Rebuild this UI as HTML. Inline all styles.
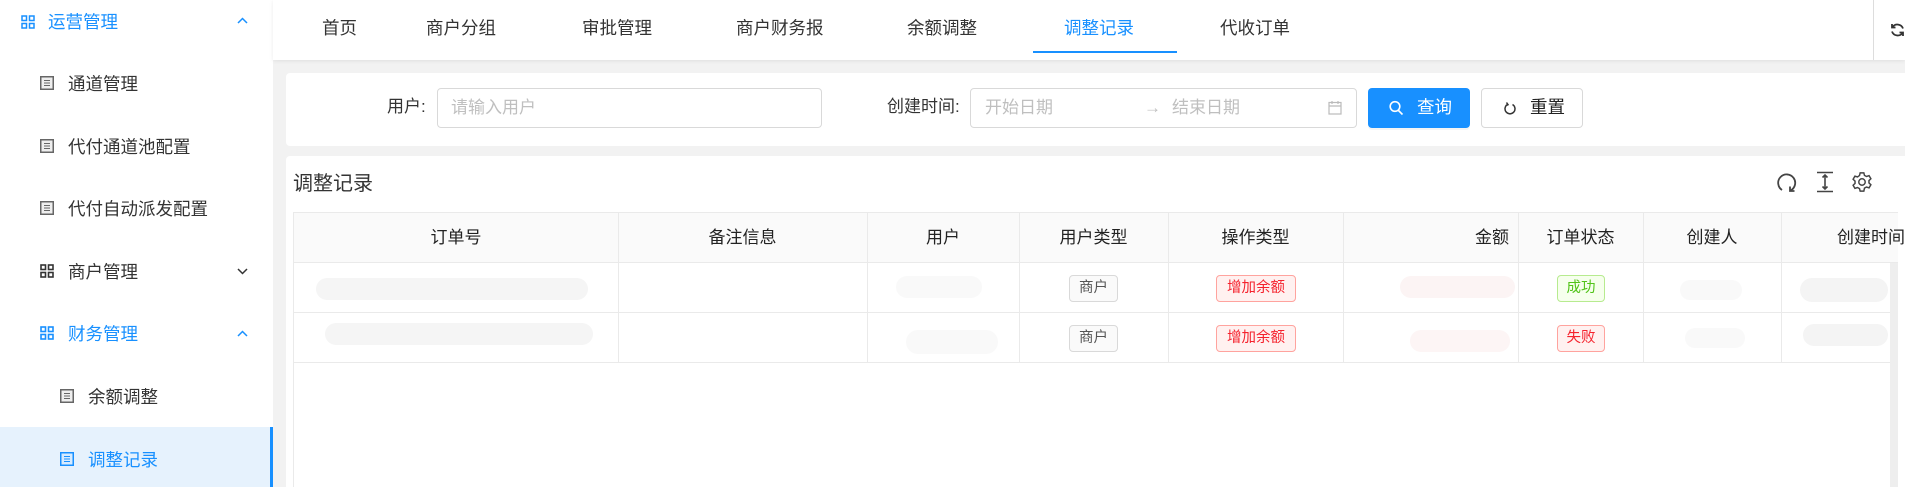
<!DOCTYPE html>
<html><head><meta charset="utf-8">
<style>
*{margin:0;padding:0;box-sizing:border-box}
html,body{width:1905px;height:487px;overflow:hidden}
body{background:#f2f2f2;font-family:"Liberation Sans","Noto Sans CJK SC",sans-serif;position:relative;color:#333}
.a{position:absolute;white-space:nowrap}
.side{position:absolute;left:0;top:0;width:273px;height:487px;background:#fff}
.mi{position:absolute;font-size:17.5px;line-height:20px;color:#333}
.blue{color:#1890ff}
.hdr{position:absolute;left:273px;top:0;width:1632px;height:60px;background:#fff;box-shadow:0 1px 4px rgba(0,0,0,.08)}
.tab{position:absolute;top:17px;font-size:17.5px;color:#333;line-height:22px}
.card{position:absolute;background:#fff;border-radius:4px}
.inp{position:absolute;border:1px solid #d9d9d9;border-radius:4px;background:#fff}
.ph{position:absolute;color:#bfbfbf;font-size:17px;line-height:20px}
.th{position:absolute;top:213px;height:50px;line-height:50px;font-size:17px;color:#222;text-align:center}
.vl{position:absolute;width:1px;background:#eaeaea}
.hl{position:absolute;height:1px;background:#eaeaea}
.tag{position:absolute;height:27px;line-height:25px;font-size:14.5px;text-align:center;border-radius:4px;border:1px solid}
.gr{background:#fafafa;border-color:#d9d9d9;color:#555}
.rd{background:#fff1f0;border-color:#ffa39e;color:#f5222d}
.gn{background:#f6ffed;border-color:#b7eb8f;color:#52c41a}
.blob{position:absolute;background:#f5f5f5;border-radius:12px}
</style></head><body>
<div class="side">
  <svg class="a" style="left:21px;top:15px" width="14" height="14" viewBox="0 0 14 14" fill="none" stroke="#1890ff" stroke-width="1.5"><rect x="1" y="1" width="4.5" height="4.5"/><rect x="8.5" y="1" width="4.5" height="4.5"/><rect x="1" y="8.5" width="4.5" height="4.5"/><rect x="8.5" y="8.5" width="4.5" height="4.5"/></svg>
  <div class="mi blue" style="left:48px;top:12px">运营管理</div>
  <svg class="a" style="left:237px;top:17px" width="11" height="7" viewBox="0 0 11 7" fill="none" stroke="#1890ff" stroke-width="1.5"><path d="M1 6l4.5-4.5L10 6"/></svg>

  <svg class="a" style="left:40px;top:76px" width="14" height="14" viewBox="0 0 14 14"><rect x="0.75" y="0.75" width="12.5" height="12.5" fill="#eee" stroke="#666" stroke-width="1.5"/><path d="M4 4.5h6M4 7h6M4 9.5h6" stroke="#666" stroke-width="1"/></svg>
  <div class="mi" style="left:68px;top:74px">通道管理</div>
  <svg class="a" style="left:40px;top:139px" width="14" height="14" viewBox="0 0 14 14"><rect x="0.75" y="0.75" width="12.5" height="12.5" fill="#eee" stroke="#666" stroke-width="1.5"/><path d="M4 4.5h6M4 7h6M4 9.5h6" stroke="#666" stroke-width="1"/></svg>
  <div class="mi" style="left:68px;top:137px">代付通道池配置</div>
  <svg class="a" style="left:40px;top:201px" width="14" height="14" viewBox="0 0 14 14"><rect x="0.75" y="0.75" width="12.5" height="12.5" fill="#eee" stroke="#666" stroke-width="1.5"/><path d="M4 4.5h6M4 7h6M4 9.5h6" stroke="#666" stroke-width="1"/></svg>
  <div class="mi" style="left:68px;top:199px">代付自动派发配置</div>

  <svg class="a" style="left:40px;top:264px" width="14" height="14" viewBox="0 0 14 14" fill="none" stroke="#333" stroke-width="1.6"><rect x="1" y="1" width="4.5" height="4.5"/><rect x="8.5" y="1" width="4.5" height="4.5"/><rect x="1" y="8.5" width="4.5" height="4.5"/><rect x="8.5" y="8.5" width="4.5" height="4.5"/></svg>
  <div class="mi" style="left:68px;top:262px">商户管理</div>
  <svg class="a" style="left:237px;top:268px" width="11" height="7" viewBox="0 0 11 7" fill="none" stroke="#333" stroke-width="1.5"><path d="M1 1l4.5 4.5L10 1"/></svg>

  <svg class="a" style="left:40px;top:326px" width="14" height="14" viewBox="0 0 14 14" fill="none" stroke="#1890ff" stroke-width="1.6"><rect x="1" y="1" width="4.5" height="4.5"/><rect x="8.5" y="1" width="4.5" height="4.5"/><rect x="1" y="8.5" width="4.5" height="4.5"/><rect x="8.5" y="8.5" width="4.5" height="4.5"/></svg>
  <div class="mi blue" style="left:68px;top:324px">财务管理</div>
  <svg class="a" style="left:237px;top:330px" width="11" height="7" viewBox="0 0 11 7" fill="none" stroke="#1890ff" stroke-width="1.5"><path d="M1 6l4.5-4.5L10 6"/></svg>

  <svg class="a" style="left:60px;top:389px" width="14" height="14" viewBox="0 0 14 14"><rect x="0.75" y="0.75" width="12.5" height="12.5" fill="#eee" stroke="#666" stroke-width="1.5"/><path d="M4 4.5h6M4 7h6M4 9.5h6" stroke="#666" stroke-width="1"/></svg>
  <div class="mi" style="left:88px;top:387px">余额调整</div>

  <div class="a" style="left:0;top:427px;width:273px;height:60px;background:#e6f2fd;border-right:3px solid #1890ff"></div>
  <svg class="a" style="left:60px;top:452px" width="14" height="14" viewBox="0 0 14 14"><rect x="0.75" y="0.75" width="12.5" height="12.5" fill="#d6ebff" stroke="#1890ff" stroke-width="1.5"/><path d="M4 4.5h6M4 7h6M4 9.5h6" stroke="#1890ff" stroke-width="1"/></svg>
  <div class="mi blue" style="left:88px;top:450px">调整记录</div>
</div>

<div class="hdr">
  <div class="tab" style="left:49px">首页</div>
  <div class="tab" style="left:153px">商户分组</div>
  <div class="tab" style="left:309px">审批管理</div>
  <div class="tab" style="left:463px">商户财务报</div>
  <div class="tab" style="left:634px">余额调整</div>
  <div class="tab" style="left:791px;color:#1890ff">调整记录</div>
  <div class="a" style="left:760px;top:51px;width:144px;height:2px;background:#1890ff"></div>
  <div class="tab" style="left:947px">代收订单</div>
  <div class="a" style="left:1600px;top:0;width:1px;height:60px;background:#ddd"></div>
  <svg class="a" style="left:1617px;top:22px" width="15" height="16" viewBox="0 0 15 16" fill="none" stroke="#333" stroke-width="1.8"><path d="M13 6.5A6 6 0 0 0 2.5 5"/><path d="M2 9.5A6 6 0 0 0 12.5 11"/><path d="M2 2v3.5h3.5" /><path d="M13 14v-3.5H9.5"/></svg>
</div>

<div class="card" style="left:286px;top:73px;width:1625px;height:73px"></div>
<div class="a" style="left:387px;top:97px;font-size:17px;line-height:20px">用户:</div>
<div class="inp" style="left:437px;top:88px;width:385px;height:40px"></div>
<div class="ph" style="left:451px;top:98px">请输入用户</div>
<div class="a" style="left:887px;top:97px;font-size:17px;line-height:20px">创建时间:</div>
<div class="inp" style="left:970px;top:88px;width:387px;height:40px"></div>
<div class="ph" style="left:985px;top:98px">开始日期</div>
<div class="ph" style="left:1144px;top:98px">→</div>
<div class="ph" style="left:1172px;top:98px">结束日期</div>
<svg class="a" style="left:1328px;top:100px" width="14" height="15" viewBox="0 0 14 15" fill="none" stroke="#bbb" stroke-width="1.2"><rect x="1" y="2.5" width="12" height="11.5"/><path d="M1 6h12M4 1v3M10 1v3"/></svg>
<div class="a" style="left:1368px;top:88px;width:102px;height:40px;background:#1890ff;border-radius:4px;box-shadow:0 2px 0 rgba(0,0,0,.04)"></div>
<svg class="a" style="left:1389px;top:100px" width="15" height="16" viewBox="0 0 15 16" fill="none" stroke="#fff" stroke-width="1.6"><circle cx="6" cy="6.5" r="4.8"/><path d="M9.5 10.5l4 4"/></svg>
<div class="a" style="left:1417px;top:97px;font-size:17.5px;line-height:21px;color:#fff">查询</div>
<div class="a" style="left:1481px;top:88px;width:102px;height:40px;background:#fff;border:1px solid #d9d9d9;border-radius:4px"></div>
<svg class="a" style="left:1504px;top:101px" width="12" height="14" viewBox="0 0 12 14" fill="none" stroke="#333" stroke-width="1.5"><path d="M3.5 3.5A5 5 0 1 0 8.5 3.5"/><path d="M2.5 1.5l1.5 2.2-2.3 1"/></svg>
<div class="a" style="left:1530px;top:97px;font-size:17.5px;line-height:21px;color:#222">重置</div>

<div class="card" style="left:286px;top:156px;width:1625px;height:340px"></div>
<div class="a" style="left:293px;top:172px;font-size:20px;line-height:24px;color:#333">调整记录</div>
<svg class="a" style="left:1776px;top:172px" width="22" height="21" viewBox="0 0 22 21" fill="none" stroke="#444" stroke-width="1.8"><path d="M14.5 18.5A8.5 8.5 0 1 0 6 18"/><path d="M14 14.5v4.5h4.5"/></svg>
<svg class="a" style="left:1816px;top:171px" width="18" height="22" viewBox="0 0 18 22" fill="none" stroke="#444" stroke-width="1.6"><path d="M1 1.5h16M1 20.5h16M9 4v14M6.5 6.5L9 4l2.5 2.5M6.5 15.5L9 18l2.5-2.5"/></svg>
<svg class="a" style="left:1851px;top:171px" width="22" height="22" viewBox="0 0 24 24" fill="none" stroke="#444" stroke-width="1.6"><circle cx="12" cy="12" r="3.5"/><path d="M10 2h4l.7 2.8 2.2 1.2 2.8-.9 2 3.4-2.1 2v2.5l2.1 2-2 3.4-2.8-.9-2.2 1.2L14 22h-4l-.7-2.8-2.2-1.2-2.8.9-2-3.4 2.1-2V11l-2.1-2 2-3.4 2.8.9L9.3 4.8z"/></svg>

<div class="a" style="left:293px;top:213px;width:1605px;height:50px;background:#fafafa"></div>
<div class="hl" style="left:293px;top:212px;width:1605px"></div>
<div class="hl" style="left:293px;top:262px;width:1605px"></div>
<div class="hl" style="left:293px;top:312px;width:1597px"></div>
<div class="hl" style="left:293px;top:362px;width:1597px"></div>
<div class="vl" style="left:293px;top:212px;height:275px"></div>
<div class="vl" style="left:618px;top:212px;height:151px"></div>
<div class="vl" style="left:867px;top:212px;height:151px"></div>
<div class="vl" style="left:1019px;top:212px;height:151px"></div>
<div class="vl" style="left:1168px;top:212px;height:151px"></div>
<div class="vl" style="left:1343px;top:212px;height:151px"></div>
<div class="vl" style="left:1518px;top:212px;height:151px"></div>
<div class="vl" style="left:1643px;top:212px;height:151px"></div>
<div class="vl" style="left:1781px;top:212px;height:151px"></div>
<div class="a" style="left:1890px;top:263px;width:8px;height:224px;background:#eee"></div>

<div class="th" style="left:294px;width:324px">订单号</div>
<div class="th" style="left:618px;width:249px">备注信息</div>
<div class="th" style="left:867px;width:152px">用户</div>
<div class="th" style="left:1019px;width:149px">用户类型</div>
<div class="th" style="left:1168px;width:175px">操作类型</div>
<div class="th" style="left:1343px;width:166px;text-align:right">金额</div>
<div class="th" style="left:1518px;width:125px">订单状态</div>
<div class="th" style="left:1643px;width:138px">创建人</div>
<div class="th" style="left:1837px;width:70px;text-align:left">创建时间</div>

<div class="blob" style="left:316px;top:278px;width:272px;height:22px"></div>
<div class="blob" style="left:325px;top:323px;width:268px;height:22px"></div>
<div class="blob" style="left:896px;top:276px;width:86px;height:22px;background:#f9f9f9"></div>
<div class="blob" style="left:906px;top:330px;width:92px;height:24px;background:#f9f9f9"></div>
<div class="blob" style="left:1400px;top:276px;width:115px;height:22px;background:#fcf4f4"></div>
<div class="blob" style="left:1410px;top:330px;width:100px;height:22px;background:#fdf5f5"></div>
<div class="blob" style="left:1680px;top:280px;width:62px;height:20px;background:#f9f9f9"></div>
<div class="blob" style="left:1685px;top:328px;width:60px;height:20px;background:#f9f9f9"></div>
<div class="blob" style="left:1800px;top:278px;width:88px;height:24px;background:#f4f4f4"></div>
<div class="blob" style="left:1803px;top:324px;width:85px;height:22px;background:#f4f4f4"></div>

<div class="tag gr" style="left:1069px;top:275px;width:49px">商户</div>
<div class="tag gr" style="left:1069px;top:325px;width:49px">商户</div>
<div class="tag rd" style="left:1216px;top:275px;width:80px">增加余额</div>
<div class="tag rd" style="left:1216px;top:325px;width:80px">增加余额</div>
<div class="tag gn" style="left:1557px;top:275px;width:48px">成功</div>
<div class="tag rd" style="left:1557px;top:325px;width:48px">失败</div>
</body></html>
